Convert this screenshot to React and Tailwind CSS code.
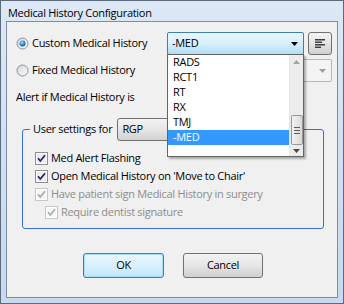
import React from 'react';

const font = "font-['Open_Sans',sans-serif]";

function Radio({ checked }) {
  return (
    <svg width="13" height="13" viewBox="0 0 13 13" className="shrink-0">
      <defs>
        <linearGradient id="radioBg" x1="0" y1="0" x2="1" y2="1">
          <stop offset="0" stopColor="#cfd2d6" />
          <stop offset="1" stopColor="#ffffff" />
        </linearGradient>
        <radialGradient id="radioDot" cx="40%" cy="35%" r="70%">
          <stop offset="0" stopColor="#a6dcff" />
          <stop offset="0.6" stopColor="#2b86d6" />
          <stop offset="1" stopColor="#0c4c93" />
        </radialGradient>
      </defs>
      <circle cx="6.5" cy="6.5" r="5.5" fill="url(#radioBg)" stroke="#8b939c" />
      {checked && <circle cx="6.5" cy="6.5" r="3" fill="url(#radioDot)" />}
    </svg>
  );
}

function Check({ disabled }) {
  return (
    <svg width="13" height="13" viewBox="0 0 13 13" className="shrink-0">
      <rect x="0.5" y="0.5" width="12" height="12" fill="#fff" stroke={disabled ? '#c6c6c6' : '#8e8f8f'} />
      <rect x="2" y="2" width="9" height="9" fill={disabled ? '#f6f6f6' : '#ececec'} />
      <path
        d="M3 6.3 L5.3 9 L10 3.3"
        fill="none"
        stroke={disabled ? '#a9a9a9' : '#1f1f6e'}
        strokeWidth="1.7"
      />
    </svg>
  );
}

function Arrow({ color = '#000' }) {
  return (
    <svg width="7" height="4" viewBox="0 0 7 4">
      <path d="M0 0 H7 L3.5 4 Z" fill={color} />
    </svg>
  );
}

export default function App() {
  const items = ['RADS', 'RCT1', 'RT', 'RX', 'TMJ', '-MED'];

  return (
    <div className={`${font} w-[344px] h-[304px] border border-[#5e6b7c] bg-gradient-to-b from-[#dce8f5] to-[#c6d9ee] text-[11px] tracking-[-0.3px] text-black flex flex-col`}>
      {/* title bar */}
      <div className="h-[20px] flex items-center pl-[7px] pt-[2px] text-[11px] leading-none">
        Medical History Configuration
      </div>

      {/* client area */}
      <div className="mx-[5px] mb-[5px] flex-1 border border-[#7d8ea4] bg-[#f0f0f0] relative">
        {/* row 1 */}
        <div className="flex items-center mt-[10px] h-[23px]">
          <div className="w-[160px] flex items-center pl-[9px]">
            <Radio checked />
            <span className="ml-[3px]">Custom Medical History</span>
          </div>
          <div className="w-[137px] h-[23px] border border-[#3c7fb1] rounded-[2px] bg-gradient-to-b from-[#eaf6fd] via-[#d6effc] to-[#b2ddf8] flex items-center pl-[4px] pr-[5px]">
            <span className="flex-1">-MED</span>
            <Arrow />
          </div>
          <div className="ml-[4px] w-[24px] h-[23px] border border-[#707070] rounded-[3px] bg-gradient-to-b from-[#f4f4f4] via-[#e4e4e4] to-[#cfcfcf] flex items-center justify-center">
            <svg width="10" height="9" viewBox="0 0 10 9">
              <rect x="0" y="0" width="10" height="1.5" fill="#3e3e3e" />
              <rect x="0" y="2.5" width="7" height="1.5" fill="#3e3e3e" />
              <rect x="0" y="5" width="10" height="1.5" fill="#3e3e3e" />
              <rect x="0" y="7.5" width="6" height="1.5" fill="#3e3e3e" />
            </svg>
          </div>
        </div>

        {/* row 2 */}
        <div className="flex items-center mt-[4px] h-[23px]">
          <div className="w-[160px] flex items-center pl-[9px]">
            <Radio />
            <span className="ml-[3px]">Fixed Medical History</span>
          </div>
          <div className="w-[165px] h-[23px] border border-[#b5b9bd] rounded-[2px] bg-[#f4f4f4] flex items-center justify-end pr-[5px]">
            <Arrow color="#a0a0a0" />
          </div>
        </div>

        {/* row 3 */}
        <div className="mt-[7px] h-[16px] flex items-center pl-[9px]">Alert if Medical History is</div>

        {/* group box */}
        <fieldset className="ml-[15px] mt-[13px] w-[302px] border border-[#3c6fd6] rounded-[3px] pb-[7px]">
          <legend className="ml-[7px] px-[3px] flex items-center">
            <span>User settings for</span>
            <div className="ml-[5px] w-[110px] h-[23px] border border-[#707070] rounded-[3px] bg-gradient-to-b from-[#f3f3f3] via-[#e6e6e6] to-[#d2d2d2] flex items-center pl-[4px]">
              RGP
            </div>
          </legend>
          <div className="mt-[8px] flex flex-col">
            <div className="h-[18px] flex items-center pl-[12px]">
              <Check />
              <span className="ml-[3px]">Med Alert Flashing</span>
            </div>
            <div className="h-[18px] flex items-center pl-[12px]">
              <Check />
              <span className="ml-[3px]">Open Medical History on 'Move to Chair'</span>
            </div>
            <div className="h-[18px] flex items-center pl-[12px] text-[#8d8d8d]">
              <Check disabled />
              <span className="ml-[3px]">Have patient sign Medical History in surgery</span>
            </div>
            <div className="h-[18px] flex items-center pl-[22px] text-[#8d8d8d]">
              <Check disabled />
              <span className="ml-[3px]">Require dentist signature</span>
            </div>
          </div>
        </fieldset>

        {/* buttons */}
        <div className="mt-[24px] flex pl-[76px] gap-[19px]">
          <button className="w-[81px] h-[25px] border border-[#3c7fb1] rounded-[3px] bg-gradient-to-b from-[#eaf6fd] via-[#d9f0fc] to-[#bee6fd] shadow-[inset_0_0_0_1px_#a6dcf6]">
            OK
          </button>
          <button className="w-[80px] h-[25px] border border-[#707070] rounded-[3px] bg-gradient-to-b from-[#f2f2f2] via-[#e6e6e6] to-[#cfcfcf]">
            Cancel
          </button>
        </div>

        {/* open dropdown list */}
        <div className="absolute left-[160px] top-[32px] w-[137px] h-[103px] border border-[#646464] bg-white shadow-[2px_2px_2px_rgba(0,0,0,0.3)] flex">
          <div className="flex-1 flex flex-col">
            {items.map((it) => (
              <div
                key={it}
                className={`h-[15px] flex items-center pl-[5px] ${it === '-MED' ? 'bg-[#3399ff] text-white' : ''}`}
              >
                {it}
              </div>
            ))}
          </div>
          <div className="w-[14px] bg-[#ececec] flex flex-col items-center border-l border-[#e4e4e4]">
            <div className="h-[14px] flex items-center justify-center">
              <svg width="7" height="4" viewBox="0 0 7 4">
                <path d="M0 4 H7 L3.5 0 Z" fill="#a5a5a5" />
              </svg>
            </div>
            <div className="mt-[46px] w-[12px] h-[30px] border border-[#979797] rounded-[2px] bg-gradient-to-r from-[#f3f3f3] to-[#d9d9d9] flex flex-col items-center justify-center gap-[2px]">
              <div className="w-[6px] h-px bg-[#5a5a5a]" />
              <div className="w-[6px] h-px bg-[#5a5a5a]" />
              <div className="w-[6px] h-px bg-[#5a5a5a]" />
            </div>
            <div className="flex-1 flex items-center justify-center">
              <Arrow color="#4a4a4a" />
            </div>
          </div>
        </div>
      </div>
    </div>
  );
}
